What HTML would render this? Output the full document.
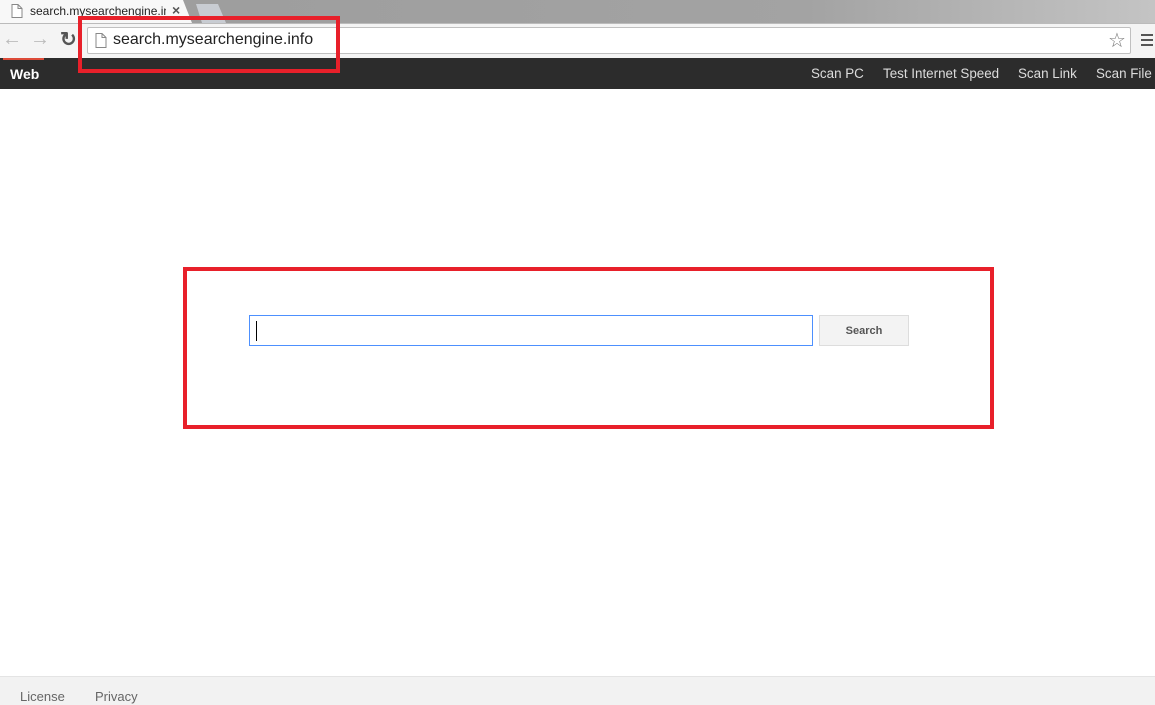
<!DOCTYPE html>
<html><head><style>
*{margin:0;padding:0;box-sizing:border-box}
body{width:1155px;height:705px;position:relative;overflow:hidden;background:#fff;font-family:"Liberation Sans",Arial,sans-serif}
.a{position:absolute}
.n{font-size:13.4px;color:#ddd;top:66px}
</style></head><body>
<div class="a" style="left:0;top:0;width:1155px;height:23px;background:linear-gradient(90deg,#9c9c9c,#a3a3a3 70%,#c4c4c4)"></div>
<div class="a" style="left:0;top:0;width:192px;height:23px;background:#f8f8f8;clip-path:polygon(0 0,183px 0,192px 23px,0 23px)"></div>
<div class="a" style="left:196px;top:4px;width:30px;height:19px;background:#c8ccd2;clip-path:polygon(0 0,22px 0,30px 19px,6px 19px)"></div>
<svg class="a" style="left:11px;top:4px" width="12" height="14"><path d="M1 .5h6l4 4v9H1z M7 .5v4h4" fill="#fff" stroke="#888"/></svg>
<div class="a" style="left:30px;top:4px;font-size:12px;color:#222;width:136px;overflow:hidden;white-space:nowrap">search.mysearchengine.info</div>
<div class="a" style="left:172px;top:2px;font-size:14px;color:#555;font-weight:bold">×</div>
<div class="a" style="left:0;top:23px;width:1155px;height:35px;background:#f4f4f4;border-top:1px solid #bbb"></div>
<div class="a" style="left:2px;top:28px;font-size:20px;color:#bbb">←</div>
<div class="a" style="left:30px;top:28px;font-size:20px;color:#bbb">→</div>
<div class="a" style="left:60px;top:27px;font-size:20px;color:#555;font-weight:bold">↻</div>
<div class="a" style="left:87px;top:27px;width:1044px;height:27px;background:#fff;border:1px solid #c0c0c0;border-radius:2px"></div>
<svg class="a" style="left:95px;top:33px" width="12" height="15"><path d="M1 .5h6l4 4v10H1z M7 .5v4h4" fill="#fff" stroke="#888"/></svg>
<div class="a" style="left:113px;top:31px;font-size:16px;color:#222">search.mysearchengine.info</div>
<div class="a" style="left:1108px;top:28px;font-size:20px;color:#777">☆</div>
<div class="a" style="left:1141px;top:34px;width:12px;height:12px;background:repeating-linear-gradient(#555 0 2px,transparent 2px 5px)"></div>
<div class="a" style="left:0;top:58px;width:1155px;height:31px;background:#2c2c2c"></div>
<div class="a" style="left:3px;top:58px;width:41px;height:2px;background:#dd4b39"></div>
<div class="a" style="left:10px;top:66px;font-size:14px;color:#fff;font-weight:bold">Web</div>
<div class="a n" style="left:811px">Scan PC</div>
<div class="a n" style="left:883px">Test Internet Speed</div>
<div class="a n" style="left:1018px">Scan Link</div>
<div class="a n" style="left:1096px">Scan File</div>
<div class="a" style="left:78px;top:16px;width:262px;height:57px;border:4px solid #e8202a"></div>
<div class="a" style="left:183px;top:267px;width:811px;height:162px;border:4px solid #e8202a"></div>
<div class="a" style="left:249px;top:315px;width:564px;height:31px;border:1px solid #4d90fe;background:#fff"></div>
<div class="a" style="left:256px;top:321px;width:1px;height:20px;background:#000"></div>
<div class="a" style="left:819px;top:315px;width:90px;height:31px;border:1px solid #ddd;background:#f3f3f3;font-size:11px;font-weight:bold;color:#555;text-align:center;line-height:31px">Search</div>
<div class="a" style="left:0;top:676px;width:1155px;height:29px;background:#f2f2f2;border-top:1px solid #e4e4e4"></div>
<div class="a" style="left:20px;top:689px;font-size:13px;color:#666">License</div>
<div class="a" style="left:95px;top:689px;font-size:13px;color:#666">Privacy</div>
</body></html>
